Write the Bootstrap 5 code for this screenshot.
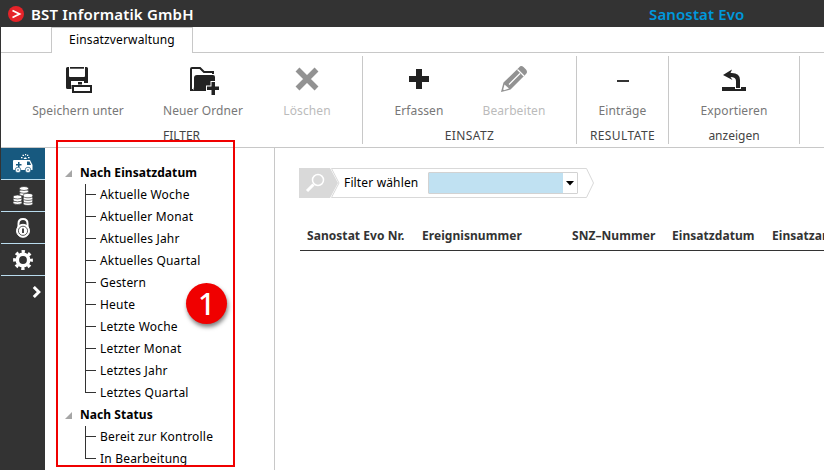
<!DOCTYPE html>
<html lang="de">
<head>
<meta charset="utf-8">
<title>Sanostat Evo</title>
<link href="https://cdn.jsdelivr.net/npm/bootstrap@5.3.0/dist/css/bootstrap.min.css" rel="stylesheet">
<style>
body{font-family:"Noto Sans","Open Sans",sans-serif;font-size:12px;line-height:22px;color:#000;background:#fff;height:470px;overflow:hidden}
svg{display:block}
.topbar{height:27px;background:#333;font-size:15px;font-weight:600;letter-spacing:.18px}
.brand{color:#fff;width:649px;padding-left:8px;gap:7px}
.product{color:#0098dc;letter-spacing:.13px}
.edge{border-left:1px solid #333}
.tabs{height:26px}
.tabs>div{border-bottom:1px solid #c8c8c8}
.tabs>.tab-gap{width:50px}
.tabs>.tab-on{width:142px;border:1px solid #c8c8c8;border-bottom:0;line-height:24px;letter-spacing:.15px}
.ribbon{height:95px;border-bottom:1px solid #c8c8c8;padding:3px 0}
.grp{border-right:1px solid #c8c8c8;height:88px}
.tool{padding-top:8px;color:#777;white-space:nowrap;letter-spacing:.1px}
.tool svg{margin-bottom:4px}
.off{color:#bbb}
.cap{line-height:16px;margin-top:6px;color:#444}
.wide{letter-spacing:.4px}
.g1{width:362px}.g2{width:214px}.g3{width:92px}.g4{width:131px}
.g1 .d-flex:first-child{padding-left:0}
.tools1{margin-left:15px}.tools2{margin-left:10px}
.w82{width:82px}.w92{width:92px}.w98{width:98px}.w124{width:124px}.w126{width:126px}
.side{width:45px;background:#333;color:#fff;border-left:1px solid #333}
.side>div{height:32px;border-bottom:1px solid #b9dcee}
.side>.cur{background:#17597f}
.side>.more{border:0;padding-right:4px}
.tree{width:230px;border-right:1px solid #c8c8c8;padding:14px 0 0 20px;white-space:nowrap}
.node{font-weight:700;height:22px;gap:8px;letter-spacing:.06px}
.leaves{margin:0 0 0 20px}
.leaf{height:22px;padding-left:15px;position:relative;letter-spacing:.2px}
.leaf::before{content:"";position:absolute;left:0;top:0;height:22px;border-left:1px solid #333}
.leaf::after{content:"";position:absolute;left:0;top:10px;width:11px;border-top:1px solid #333}
.leaf:last-child::before{height:11px}
.filterbar{width:300px;height:30px;margin:20px 0 0 24px;position:relative}
.filterbar>.shape{position:absolute;left:0;top:0}
.flabel{padding-left:45px;width:129px;position:relative;letter-spacing:.15px}
.pick{width:150px;height:22px;border:1px solid #d2d2d2;border-radius:1px;position:relative;background:#fff}
.pick>.val{width:134px;background:#c0e1f2}
.heads{margin:23px 0 0 25px;height:30px;border-bottom:1px solid #333;font-weight:700;color:#333;white-space:nowrap;line-height:30px;padding-left:7px;letter-spacing:.05px}
.heads span{flex:none}
.c100{width:100px}.c115{width:115px}.c150{width:150px}
.marker{position:absolute;left:56px;top:140px;width:179px;height:327px;border:2px solid #f00000}
.callout{position:absolute;left:186px;top:283px;width:41px;height:41px;border-radius:50%;background:#f00000;color:#fff;font-size:30px;font-weight:500;box-shadow:1px 3px 4px rgba(0,0,0,.5)}
</style>
<script src="https://cdn.jsdelivr.net/npm/bootstrap@5.3.0/dist/js/bootstrap.bundle.min.js"></script>
</head>
<body class="d-flex flex-column position-relative">
<header class="topbar d-flex align-items-center">
 <div class="brand d-flex align-items-center">
  <svg width="16" height="16" viewBox="0 0 16 16"><circle cx="8" cy="8" r="8" fill="#e52329"/><path d="M4.500 4.500 11.500 8l-7 3.500" fill="none" stroke="#fff" stroke-width="1.800"/></svg>
  <span>BST Informatik GmbH</span>
 </div>
 <span class="product">Sanostat Evo</span>
</header>
<div class="edge">
 <nav class="tabs d-flex"><div class="tab-gap"></div><div class="tab-on text-center">Einsatzverwaltung</div><div class="flex-fill"></div></nav>
 <div class="ribbon d-flex">
  <section class="grp g1">
   <div class="tools1 d-flex">
    <div class="tool w124 d-flex flex-column align-items-center">
     <svg width="32" height="32" viewBox="0 0 32 32"><path d="M8 3h14v1.700H8z" fill="#222"/><path d="M4 4.500Q4 3 5.500 3H7v9q0 1 1 1h14q1 0 1-1V3h1.500Q26 3 26 4.500V19H10v6H5.500Q4 25 4 23.500z" fill="#222"/><path d="M9 17h13v4H9z" fill="#fff"/><path d="M16 18h4v3h-4z" fill="#222"/><path d="M9.500 20.500h20v8h-20z" fill="#fff"/><path d="M11 22h18v6H11z" fill="#fff" stroke="#222" stroke-width="2"/></svg>
     <span>Speichern unter</span></div>
    <div class="tool w126 d-flex flex-column align-items-center">
     <svg width="32" height="32" viewBox="0 0 32 32"><path d="M6 26H4V5q0-1 1-1h8l4 4h9v2" fill="none" stroke="#222" stroke-width="2"/><path d="M7 14q0-3 3-3h16q2 0 2 2v6h-4v5h-4v3H5q2-1 2-4z" fill="#222"/><path d="M23.500 17h5.500v4.500h4V27h-4v5h-5.500v-5H19v-5.500h4.500z" fill="#fff"/><path d="M24.500 18H28v4.500h4V26h-4v5h-3.500v-5H20v-3.500h4.500z" fill="#222"/></svg>
     <span>Neuer Ordner</span></div>
    <div class="tool off w82 d-flex flex-column align-items-center">
     <svg width="32" height="32" viewBox="0 0 32 32"><path d="m6.500 5.500 19 19m0-19-19 19" stroke="#929292" stroke-width="5.500"/></svg>
     <span>Löschen</span></div>
   </div>
   <div class="cap text-center">FILTER</div>
  </section>
  <section class="grp g2">
   <div class="tools2 d-flex">
    <div class="tool w92 d-flex flex-column align-items-center">
     <svg width="32" height="32" viewBox="0 0 32 32"><path d="M16 5v20M6 15h20" stroke="#222" stroke-width="6"/></svg>
     <span>Erfassen</span></div>
    <div class="tool off w98 d-flex flex-column align-items-center">
     <svg width="32" height="32" viewBox="0 0 32 32"><path d="m3 28 2.500-9.500L21 3.500q2-2.500 4.500-.5l2.500 2.500q2 2.500 0 4.500L12.500 25.500z" fill="#929292"/><path d="m6.500 20.500 4.500 4-5 1.800-.8-.8z" fill="#fff"/><path d="m19.500 5.500 6.500 6.500M11 20.500 22 9.500" stroke="#fff" stroke-width="1.200"/></svg>
     <span>Bearbeiten</span></div>
   </div>
   <div class="cap wide text-center">EINSATZ</div>
  </section>
  <section class="grp g3">
   <div class="tool d-flex flex-column align-items-center">
    <svg width="32" height="32" viewBox="0 0 32 32"><path d="M10 16h12v2H10z" fill="#333"/></svg>
    <span>Einträge</span></div>
   <div class="cap wide text-center">RESULTATE</div>
  </section>
  <section class="grp g4">
   <div class="tool d-flex flex-column align-items-center">
    <svg width="32" height="32" viewBox="0 0 32 32"><path d="M4 23h24v4H4z" fill="#222"/><path d="M17 21h6v4h-6z" fill="#fff"/><path d="m5 11 9-5.500-1.500 3.500Q22 8.500 22 16v8h-4v-7q0-4-5.500-4l2 3z" fill="#222"/></svg>
    <span>Exportieren</span></div>
   <div class="cap text-center">anzeigen</div>
  </section>
 </div>
</div>
<main class="d-flex flex-fill">
 <aside class="side d-flex flex-column flex-shrink-0">
  <div class="cur d-flex align-items-center justify-content-center">
   <svg width="20" height="20" viewBox="0 0 20 20" fill="#fff"><path d="M0 7q0-1 1-1h16l2.500 5v5H1q-1 0-1-1z"/><path d="M14 7.500h2.500l1.500 3.500h-4zM5 8h1.500v2h2v1.500h-2v2H5v-2H3V10h2z" fill="#17597f"/><circle cx="5" cy="16" r="2.800" stroke="#17597f" stroke-width=".7"/><circle cx="15" cy="16" r="2.800" stroke="#17597f" stroke-width=".7"/><circle cx="5" cy="16" r=".8" fill="#17597f"/><circle cx="15" cy="16" r=".8" fill="#17597f"/><path d="M10.500 5q1.800-3.500 3.500 0zM8 3h1.500v1.200H8zM9.500.8H11V2H9.500zM12 0h1.200v1.300H12zM14 .8h1.300V2H14zM15 3h1.500v1.200H15z"/></svg></div>
  <div class="d-flex align-items-center justify-content-center">
   <svg width="20" height="20" viewBox="0 0 20 20" fill="#fff" stroke="#333" stroke-width=".7"><ellipse cx="4.500" cy="16.500" rx="4.500" ry="2"/><ellipse cx="4.500" cy="13.800" rx="4.500" ry="2"/><ellipse cx="4.500" cy="11" rx="4.500" ry="2"/><ellipse cx="11" cy="8" rx="4.500" ry="2"/><ellipse cx="11" cy="5.300" rx="4.500" ry="2"/><ellipse cx="11" cy="2.500" rx="4.500" ry="2"/><ellipse cx="15" cy="17.300" rx="4.800" ry="2.200"/><ellipse cx="15" cy="14.800" rx="4.800" ry="2.200"/><ellipse cx="15" cy="12.200" rx="4.800" ry="2.200"/><ellipse cx="15" cy="9.600" rx="4.800" ry="2.200"/></svg></div>
  <div class="d-flex align-items-center justify-content-center">
   <svg width="20" height="20" viewBox="0 0 20 20" fill="none" stroke="#fff"><path d="M5.500 9V5.500q0-4.500 4.500-4.500t4.500 4.500V9" stroke-width="2"/><circle cx="10" cy="12.800" r="6.500" fill="#fff"/><circle cx="10" cy="12.800" r="4.600" stroke="#333" stroke-width=".8"/><path d="M10 10.500v4.500" stroke="#333" stroke-width="1.800"/></svg></div>
  <div class="d-flex align-items-center justify-content-center">
   <svg width="20" height="20" viewBox="0 0 20 20" fill="none" stroke="#fff"><circle cx="10" cy="10" r="5.700" stroke-width="3.600"/><circle cx="10" cy="10" r="8.400" stroke-width="3" stroke-dasharray="3.300 3.297" stroke-dashoffset="1.650"/></svg></div>
  <div class="more d-flex align-items-center justify-content-end"><svg width="9" height="12" viewBox="0 0 9 12"><path d="m1.800 1 5 5-5 5" fill="none" stroke="#fff" stroke-width="3"/></svg></div>
 </aside>
 <nav class="tree flex-shrink-0">
  <div class="node d-flex align-items-center"><svg width="7" height="7"><path d="M7 0v7H0z" fill="#a6a6a6"/></svg>Nach Einsatzdatum</div>
  <div class="leaves">
   <div class="leaf">Aktuelle Woche</div><div class="leaf">Aktueller Monat</div><div class="leaf">Aktuelles Jahr</div><div class="leaf">Aktuelles Quartal</div><div class="leaf">Gestern</div><div class="leaf">Heute</div><div class="leaf">Letzte Woche</div><div class="leaf">Letzter Monat</div><div class="leaf">Letztes Jahr</div><div class="leaf">Letztes Quartal</div>
  </div>
  <div class="node d-flex align-items-center"><svg width="7" height="7"><path d="M7 0v7H0z" fill="#a6a6a6"/></svg>Nach Status</div>
  <div class="leaves"><div class="leaf">Bereit zur Kontrolle</div><div class="leaf">In Bearbeitung</div></div>
 </nav>
 <section class="flex-fill overflow-hidden">
  <div class="filterbar d-flex align-items-center">
   <svg class="shape" width="300" height="30" viewBox="0 0 300 30"><path d="M0 0h31l8 15-8 15H0z" fill="#d9d9d9"/><path d="M32.500.5h255l7 14.500-7 14.500h-255L40 15z" fill="#fff" stroke="#d9d9d9"/><circle cx="19" cy="12" r="5.500" fill="none" stroke="#fff" stroke-width="1.500"/><path d="m14.500 16.500-6.500 6.500" stroke="#fff" stroke-width="3"/></svg>
   <span class="flabel">Filter wählen</span>
   <div class="pick d-flex"><div class="val"></div><svg class="m-auto" width="8" height="5"><path d="M0 0h8L4 4.500z"/></svg></div>
  </div>
  <div class="heads d-flex"><span class="c115">Sanostat Evo Nr.</span><span class="c150">Ereignisnummer</span><span class="c100">SNZ–Nummer</span><span class="c100">Einsatzdatum</span><span>Einsatzart</span></div>
 </section>
</main>
<div class="marker"></div>
<div class="callout d-flex align-items-center justify-content-center">1</div>
</body>
</html>
